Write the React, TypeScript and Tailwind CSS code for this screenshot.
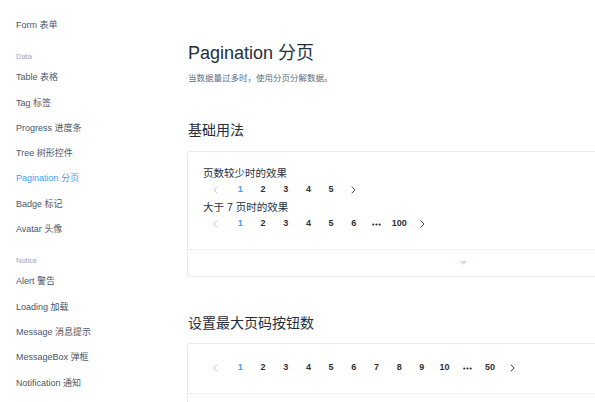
import React from "react";

type NavEntry = { label: string; group?: boolean; active?: boolean };

const nav: NavEntry[] = [
  { label: "Form 表单" },
  { label: "Data", group: true },
  { label: "Table 表格" },
  { label: "Tag 标签" },
  { label: "Progress 进度条" },
  { label: "Tree 树形控件" },
  { label: "Pagination 分页", active: true },
  { label: "Badge 标记" },
  { label: "Avatar 头像" },
  { label: "Notice", group: true },
  { label: "Alert 警告" },
  { label: "Loading 加载" },
  { label: "Message 消息提示" },
  { label: "MessageBox 弹框" },
  { label: "Notification 通知" },
];

const font = {
  fontFamily: '"Liberation Sans", "Noto Sans CJK SC", sans-serif',
};

const Chevron = ({ dir, disabled }: { dir: "left" | "right"; disabled?: boolean }) => (
  <svg width="5" height="8" viewBox="0 0 5 8" fill="none">
    <path
      d={dir === "left" ? "M4.2 0.6 L1 4 L4.2 7.4" : "M0.8 0.6 L4 4 L0.8 7.4"}
      stroke={disabled ? "#c0c4cc" : "#303133"}
      strokeWidth={0.9}
    />
  </svg>
);

const More = () => (
  <svg width="9" height="3" viewBox="0 0 9 3">
    <circle cx="1.3" cy="1.5" r="1.1" fill="#303133" />
    <circle cx="4.5" cy="1.5" r="1.1" fill="#303133" />
    <circle cx="7.7" cy="1.5" r="1.1" fill="#303133" />
  </svg>
);

const Pager = ({ items }: { items: (number | "more")[] }) => (
  <div className="flex items-center py-px pl-[3px]">
    <div className="flex h-[18px] w-[23px] items-center justify-center pr-[5px]">
      <Chevron dir="left" disabled />
    </div>
    {items.map((it, i) => (
      <div
        key={i}
        className={`flex h-[18px] w-[22.7px] items-center justify-center text-[9px] font-bold ${
          it === 1 ? "text-[#409eff]" : "text-[#303133]"
        }`}
      >
        {it === "more" ? <More /> : it}
      </div>
    ))}
    <div className="flex h-[18px] w-[23px] items-center justify-center">
      <Chevron dir="right" />
    </div>
  </div>
);

const Card = ({ children }: { children: React.ReactNode }) => (
  <div className="rounded-[2px] border border-[#ebebeb]">
    <div className="pt-[14px] pb-[15px] pl-[15px]">{children}</div>
    <div className="flex h-[27px] items-center justify-center border-t border-[#eaeefb]">
      <svg width="7" height="4" viewBox="0 0 7 4">
        <path d="M0 0 L7 0 L3.5 4 Z" fill="#d3dce6" />
      </svg>
    </div>
  </div>
);

export default function App() {
  return (
    <div className="flex h-screen w-screen overflow-hidden bg-white" style={font}>
      <aside className="w-[187px] shrink-0 pt-[13px] pl-[16px]">
        {nav.map((n) =>
          n.group ? (
            <div key={n.label} className="pt-[13px] pb-[2px] text-[7.5px] leading-[12px] text-[#99a9bf]">
              {n.label}
            </div>
          ) : (
            <div
              key={n.label}
              className={`text-[9px] leading-[25.3px] ${n.active ? "text-[#409eff]" : "text-[#48576a]"}`}
            >
              {n.label}
            </div>
          )
        )}
      </aside>
      <main className="w-[552px] shrink-0 pt-[41px]">
        <h2 className="pl-px text-[18px] leading-[24px] text-[#1f2f3d]">Pagination 分页</h2>
        <p className="mt-[7px] pl-px text-[8.5px] leading-[12px] text-[#5e6d82]">
          当数据量过多时，使用分页分解数据。
        </p>
        <h3 className="mt-[36px] mb-[11px] pl-px text-[14px] leading-[20px] text-[#1f2f3d]">基础用法</h3>
        <Card>
          <div className="text-[10.5px] leading-[14px] text-[#1f2f3d]">页数较少时的效果</div>
          <Pager items={[1, 2, 3, 4, 5]} />
          <div className="text-[10.5px] leading-[14px] text-[#1f2f3d]">大于 7 页时的效果</div>
          <Pager items={[1, 2, 3, 4, 5, 6, "more", 100]} />
        </Card>
        <h3 className="mt-[36px] mb-[10px] pl-px text-[14px] leading-[20px] text-[#1f2f3d]">设置最大页码按钮数</h3>
        <Card>
          <Pager items={[1, 2, 3, 4, 5, 6, 7, 8, 9, 10, "more", 50]} />
        </Card>
      </main>
    </div>
  );
}
